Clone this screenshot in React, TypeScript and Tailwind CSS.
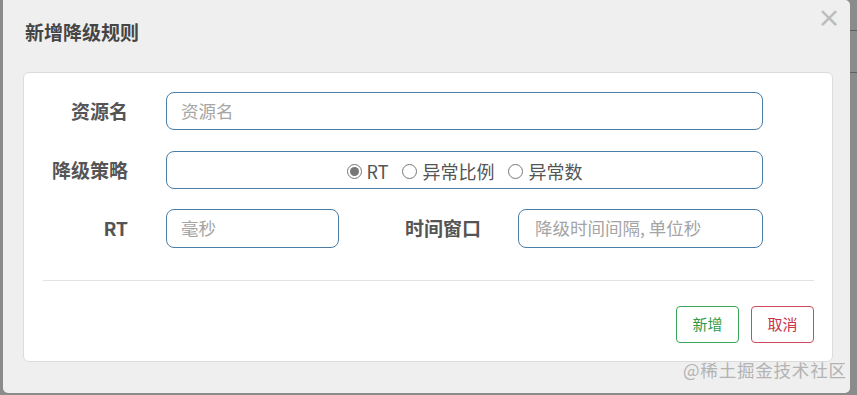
import React from 'react';

const FONT = { fontFamily: '"Noto Sans CJK SC", "Noto Sans", sans-serif' };

const Radio: React.FC<{ label: string; checked?: boolean }> = ({ label, checked }) => (
  <label className="flex items-center gap-[5px] mr-[14px] last:mr-0">
    <span className="w-[15px] h-[15px] rounded-full border border-[#777] bg-white flex items-center justify-center">
      {checked && <span className="w-[9px] h-[9px] rounded-full bg-[#777]" />}
    </span>
    <span>{label}</span>
  </label>
);

export default function App() {
  return (
    <div className="w-[857px] h-[395px] bg-[#8b8b8b] flex overflow-hidden relative" style={FONT}>
      {/* Modal */}
      <div className="ml-[3px] w-[847px] h-[393px] bg-[#efefef] rounded-b-[5px] rounded-tr-[5px] flex flex-col">
        {/* Header */}
        <div className="h-[72px] flex items-center justify-between pl-[22px] pr-[9px] pb-[8px]">
          <h4 className="text-[19px] font-bold text-[#454545]">新增降级规则</h4>
          <span className="text-[24px] leading-none font-bold text-[#bdbdbd] -mt-[30px]">×</span>
        </div>

        {/* Body */}
        <div className="ml-[20px] w-[810px] h-[290px] bg-white rounded-[6px] border border-[#dcdcdc] pt-[19px] text-[#555]">
          <div className="flex items-center h-[38px]">
            <div className="w-[104px] text-right text-[19px] font-bold">资源名</div>
            <div className="ml-[38px] w-[597px] h-[38px] rounded-[8px] border border-[#4a7ea8] flex items-center pl-[14px] text-[17.5px] text-[#a5a5a5]">
              资源名
            </div>
          </div>

          <div className="flex items-center h-[38px] mt-[21px]">
            <div className="w-[104px] text-right text-[19px] font-bold">降级策略</div>
            <div className="ml-[38px] w-[597px] h-[38px] rounded-[8px] border border-[#4a7ea8] flex items-center justify-center pt-[3px] text-[18px] text-[#555]">
              <Radio label="RT" checked />
              <Radio label="异常比例" />
              <Radio label="异常数" />
            </div>
          </div>

          <div className="flex items-center h-[39px] mt-[20px]">
            <div className="w-[104px] text-right text-[19px] font-bold">RT</div>
            <div className="ml-[38px] w-[173px] h-[39px] rounded-[8px] border border-[#4a7ea8] flex items-center pl-[14px] text-[17.5px] text-[#a5a5a5]">
              毫秒
            </div>
            <div className="w-[142px] text-right text-[19px] font-bold">时间窗口</div>
            <div className="ml-[37px] w-[245px] h-[39px] rounded-[8px] border border-[#4a7ea8] flex items-center pl-[16px] text-[17.5px] text-[#a5a5a5]">
              降级时间间隔, 单位秒
            </div>
          </div>

          <div className="ml-[19px] w-[771px] border-t border-[#e2e2e2] mt-[32px]" />

          <div className="flex justify-end gap-[12px] mr-[18px] mt-[25px]">
            <button className="w-[63px] h-[37px] rounded-[4px] border border-[#3aa55a] text-[#2e9b4c] text-[15px] bg-white">
              新增
            </button>
            <button className="w-[63px] h-[37px] rounded-[4px] border border-[#cf4a5e] text-[#c9344b] text-[15px] bg-white">
              取消
            </button>
          </div>
        </div>
      </div>

      {/* Underlying page strip on the right */}
      <div className="flex-1 flex flex-col">
        <div className="h-[30px]" />
        <div className="h-[42px] border-t border-[#5f5f5f]" />
        <div className="flex-1 border-t border-[#5f5f5f]" />
      </div>

      {/* Watermark */}
      <div className="absolute left-[683px] top-[358px] text-[17.5px] leading-[24px] text-[#b3b3b3] tracking-[0.8px]">
        @稀土掘金技术社区
      </div>
    </div>
  );
}
